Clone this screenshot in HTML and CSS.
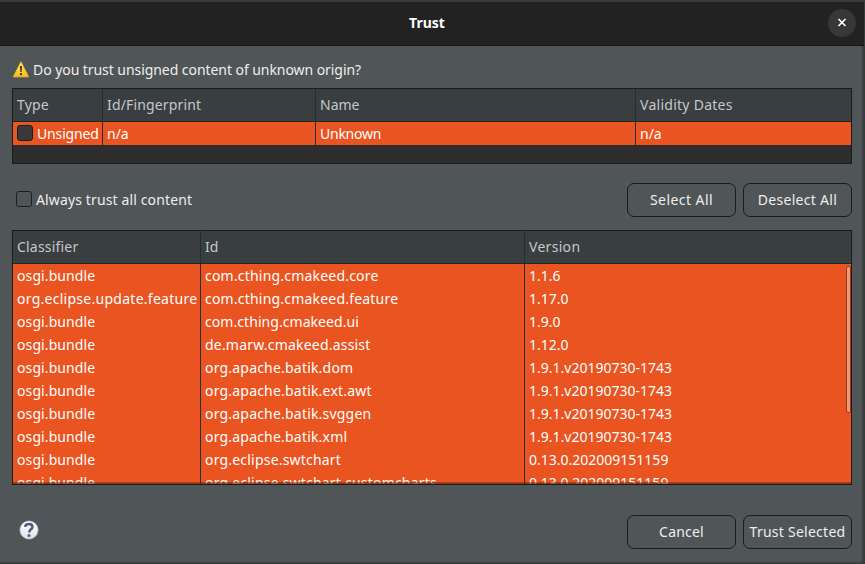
FILE: index.html
```html
<!DOCTYPE html>
<html lang="en">
<head>
<meta charset="utf-8">
<title>Trust</title>
<link rel="stylesheet" href="styles.css">
</head>
<body>
<div class="window">
  <header class="titlebar">
    <h1><span class="t-title">Trust</span></h1>
    <button class="close" aria-label="Close"><svg width="28" height="28" viewBox="0 0 28 28"><path d="M10.500 10l7 7M17.500 10l-7 7" stroke="#fff" stroke-width="1.600"/></svg></button>
  </header>
  <main class="content">
    <div class="question">
      <svg width="17" height="17" viewBox="0 0 17 17"><defs><linearGradient id="w" x2="0" y2="1"><stop stop-color="#fff07a"/><stop offset=".5" stop-color="#fdd835"/><stop offset="1" stop-color="#f9b72c"/></linearGradient></defs><path d="M9 .8L16.500 15.800H1.300z" fill="url(#w)" stroke="#f6b526" stroke-width="1" stroke-linejoin="round"/><path d="M8 5h2l-.4 6H8.400z" fill="#35322b"/><circle cx="9" cy="13.200" r="1.100" fill="#35322b"/></svg>
      <span class="t-question">Do you trust unsigned content of unknown origin?</span>
    </div>
    <div class="table signers">
      <div class="row head"><div><span class="t-type">Type</span></div><div><span class="t-fp">Id/Fingerprint</span></div><div><span>Name</span></div><div><span class="t-dates">Validity Dates</span></div></div>
      <div class="row selected"><div><i class="check filled"></i><span class="t-unsigned">Unsigned</span></div><div><span>n/a</span></div><div><span class="t-unknown">Unknown</span></div><div><span>n/a</span></div></div>
    </div>
    <div class="options">
      <label><i class="check"></i><span class="t-always">Always trust all content</span></label>
      <div class="buttons"><button class="btn"><span class="t-select">Select All</span></button><button class="btn"><span class="t-deselect">Deselect All</span></button></div>
    </div>
    <div class="table units">
      <div class="row head"><div><span class="t-class">Classifier</span></div><div><span>Id</span></div><div><span class="t-version">Version</span></div></div>
      <div class="body">
        <div class="row selected"><div>osgi.bundle</div><div>com.cthing.cmakeed.core</div><div>1.1.6</div></div>
        <div class="row selected"><div class="feature">org.eclipse.update.feature</div><div>com.cthing.cmakeed.feature</div><div>1.17.0</div></div>
        <div class="row selected"><div>osgi.bundle</div><div class="ui">com.cthing.cmakeed.ui</div><div>1.9.0</div></div>
        <div class="row selected"><div>osgi.bundle</div><div>de.marw.cmakeed.assist</div><div>1.12.0</div></div>
        <div class="row selected"><div>osgi.bundle</div><div>org.apache.batik.dom</div><div>1.9.1.v20190730-1743</div></div>
        <div class="row selected"><div>osgi.bundle</div><div>org.apache.batik.ext.awt</div><div>1.9.1.v20190730-1743</div></div>
        <div class="row selected"><div>osgi.bundle</div><div>org.apache.batik.svggen</div><div>1.9.1.v20190730-1743</div></div>
        <div class="row selected"><div>osgi.bundle</div><div>org.apache.batik.xml</div><div>1.9.1.v20190730-1743</div></div>
        <div class="row selected"><div>osgi.bundle</div><div>org.eclipse.swtchart</div><div>0.13.0.202009151159</div></div>
        <div class="row selected"><div>osgi.bundle</div><div>org.eclipse.swtchart.customcharts</div><div>0.13.0.202009151159</div></div>
      </div>
      <div class="scroll"></div>
    </div>
    <footer>
      <svg class="help" width="20" height="20" viewBox="0 0 20 20"><defs><linearGradient id="h" x2="0" y2="1"><stop stop-color="#fff"/><stop offset="1" stop-color="#dfe1e5"/></linearGradient></defs><circle cx="10" cy="10" r="9.300" fill="url(#h)" stroke="#7186a4" stroke-width=".7"/><path d="M6.200 6.800C6.500 2.900 13.500 3 13.500 6.900C13.500 9.300 10.200 9.300 10.200 12.400" fill="none" stroke="#4b5c80" stroke-width="2.500"/><circle cx="10" cy="15.500" r="1.500" fill="#4b5c80"/></svg>
      <div class="buttons"><button class="btn"><span class="t-cancel">Cancel</span></button><button class="btn"><span class="t-trust">Trust Selected</span></button></div>
    </footer>
  </main>
</div>
</body>
</html>
```
FILE: styles.css
```css
* { box-sizing: border-box; }
body {
  margin: 0;
  width: 865px;
  height: 564px;
  overflow: hidden;
  background: #383b3c;
  padding: 2px 1px 0 0;
  font: 14px/23px "Noto Sans", sans-serif;
  color: #eee;
}
.window { height: 562px; background: #3d4041; }
.titlebar {
  height: 44px;
  background: #222;
  border-bottom: 1px solid #151515;
  display: grid;
  grid-template-columns: 1fr 28px;
  align-items: center;
  padding: 0 8px 0 0;
}
h1 {
  margin: -2px -36px 0 0;
  padding-right: 10px;
  font-size: 14px;
  font-weight: 700;
  text-align: center;
  color: #fff;
}
button { font: inherit; color: inherit; margin: 0; padding: 0; }
.close {
  width: 28px;
  height: 28px;
  border: 0;
  border-radius: 50%;
  background: #373737;
  margin-top: -1px;
  z-index: 1;
}
.close svg { display: block; }
.content {
  width: 862px;
  height: 516px;
  background: #505557;
  padding: 12px 10px 0 12px;
}
.question { height: 30px; padding-top: 1px; display: flex; align-items: flex-start; gap: 4px; }
.question svg { margin-top: 2px; }
.question span { line-height: 22px; }
.table {
  width: 840px;
  border: 1px solid #191b1c;
  background: #2d2d2d;
  position: relative;
  overflow: hidden;
}
.row { display: grid; height: 23px; white-space: nowrap; }
.row > div { padding-left: 4px; border-right: 1px solid #292d2e; display: flex; align-items: center; }
.row > div:last-child { border-right: 0; }
.head { height: 33px; background: #393e40; color: #c6c8c8; border-bottom: 1px solid #222627; }
.head > div { padding-bottom: 2px; }
.selected { background: #e95420; color: #fff; }
.signers { height: 76px; }
.signers .row { grid-template-columns: 90px 213px 320px 1fr; }
.check {
  width: 16px;
  height: 16px;
  flex: none;
  border: 1px solid #1c1e1f;
  border-radius: 3px;
  margin-right: 4px;
}
.filled { background: #393939; margin-top: -1px; }
.options { height: 66px; display: flex; justify-content: space-between; align-items: flex-start; padding-top: 19px; }
.options label { display: flex; align-items: center; height: 32px; }
.options .check { margin: 0 4px 0 4px; }
.buttons { display: flex; gap: 7px; }
.btn {
  width: 109px;
  height: 34px;
  padding-bottom: 2px;
  border: 1px solid #191b1c;
  border-radius: 7px;
  background: #505557;
  white-space: nowrap;
}
.units { height: 255px; }
.units .row { grid-template-columns: 188px 324px 1fr; }
.body { height: 220px; overflow: hidden; }
.body .row > div:first-child { letter-spacing: .1px; }
.body .row > div:nth-child(2) { letter-spacing: .2px; }
.body .row > .feature:first-child { letter-spacing: .27px; }
.body .row > .ui:nth-child(2) { letter-spacing: .06px; }
.t-question { letter-spacing: -.06px; }
.t-type { letter-spacing: .2px; }
.t-fp { letter-spacing: .15px; }
.t-dates { letter-spacing: .27px; }
.t-unsigned { letter-spacing: -.15px; }
.t-unknown { letter-spacing: -.25px; }
.t-always { letter-spacing: .13px; }
.t-select { letter-spacing: .45px; }
.t-deselect { letter-spacing: .3px; }
.t-class { letter-spacing: .2px; }
.t-version { letter-spacing: .3px; }
.t-cancel { letter-spacing: .2px; }
.t-trust { letter-spacing: .25px; }
.body::after {
  content: "";
  display: block;
  position: absolute;
  left: 0;
  right: 0;
  bottom: 0;
  height: 2px;
  background: linear-gradient(rgba(120, 38, 12, .35), rgba(100, 32, 10, .75));
}
.scroll {
  position: absolute;
  right: 0;
  top: 35px;
  width: 5px;
  height: 147px;
  border: 1px solid #9c3917;
  border-radius: 2px;
  background: #f29879;
}
footer { display: flex; justify-content: space-between; align-items: flex-start; padding-top: 30px; }
.help { margin: 5px 0 0 7px; }
```
